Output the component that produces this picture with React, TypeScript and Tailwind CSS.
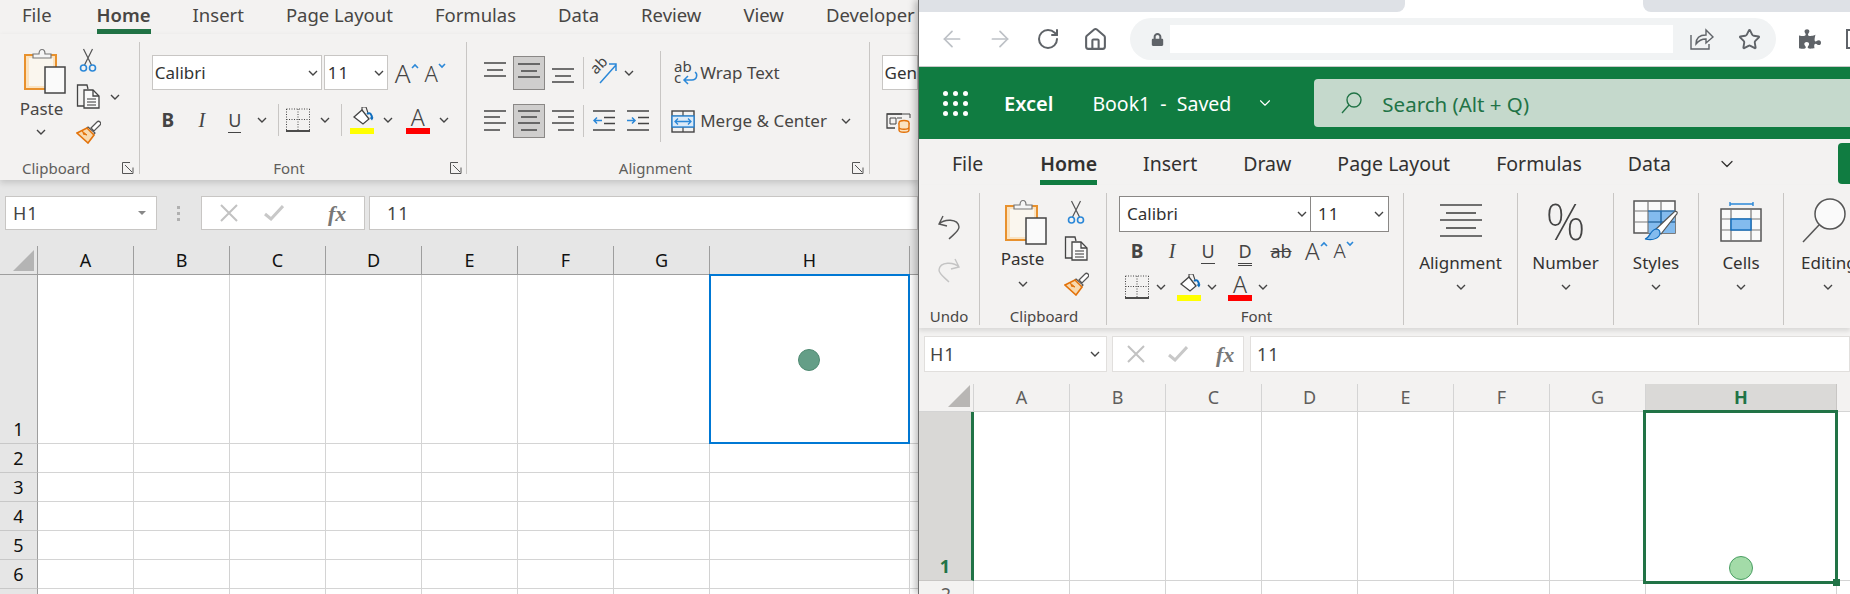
import { ArrowLeft, ArrowRight, RotateCw, Home, Star, ChevronDown } from 'lucide-react';
import { FaPuzzlePiece, FaLock } from 'react-icons/fa';

const Chev = ({ className = '' }: { className?: string }) => (
  <svg width="10" height="6" viewBox="0 0 10 6" className={className} fill="none" stroke="#444" strokeWidth="1.4">
    <path d="M1 1l4 4 4-4" />
  </svg>
);

const Launcher = () => (
  <svg width="12" height="12" viewBox="0 0 12 12" fill="none" stroke="#555" strokeWidth="1">
    <path d="M8 .5H.5v11h8M3 3l7 7M11 5.5v6H5" />
  </svg>
);

const PasteIcon = () => (
  <svg width="42" height="46" viewBox="0 0 42 46" fill="none">
    <rect x="1" y="7" width="31" height="34" fill="#fbe3c0" stroke="#e8912d" strokeWidth="2" />
    <rect x="5" y="10" width="24" height="28" fill="#faf6ee" />
    <path d="M9 10V6h6c0-6 6-6 6 0h6v4z" fill="#f5f5f5" stroke="#777" strokeWidth="1.2" />
    <rect x="21" y="19" width="20" height="26" fill="#fafafa" stroke="#444" strokeWidth="1.5" />
  </svg>
);

const CutIcon = () => (
  <svg width="18" height="25" viewBox="0 0 18 25" fill="none">
    <path d="M4.5 1l8 16M13.5 1l-8 16" stroke="#555" strokeWidth="1.2" />
    <circle cx="4.5" cy="20" r="3" stroke="#2b88d8" strokeWidth="1.6" />
    <circle cx="13.5" cy="20" r="3" stroke="#2b88d8" strokeWidth="1.6" />
  </svg>
);

const CopyIcon = () => (
  <svg width="25" height="25" viewBox="0 0 25 25" fill="none" stroke="#444" strokeWidth="1.3">
    <path d="M8 22H1.5V1h9.5l1 4" />
    <path d="M8 6h9l6 6v12H8z" fill="#fafafa" />
    <path d="M17 6v6h6" />
    <path d="M11 15h9M11 18h9M11 21h9" stroke="#777" />
  </svg>
);

const PainterIcon = () => (
  <svg width="25" height="24" viewBox="0 0 25 24" fill="none">
    <path d="M15 8l6-6a2 2 0 013 3l-6 6z" fill="#fff" stroke="#555" strokeWidth="1.2" />
    <path d="M12 7l7 6-2 2-7-6z" fill="#fff" stroke="#555" strokeWidth="1.2" />
    <path d="M1 13l10-5 7 7-6 8z" fill="#f8d9ae" stroke="#e3730b" strokeWidth="1.6" />
    <path d="M6 11l5 4-4-1" fill="#e3730b" stroke="#e3730b" />
  </svg>
);

const BorderIcon = () => (
  <svg width="24" height="24" viewBox="0 0 24 24" fill="none">
    <path d="M.5 1h23M.5 1v21M23.5 1v21M12 1v21M.5 11.5h23" stroke="#444" strokeDasharray="1 1.5" />
    <path d="M0 23h24" stroke="#222" strokeWidth="1.6" />
  </svg>
);

const FillIcon = () => (
  <div className="flex w-[24px] flex-col items-center">
    <svg width="24" height="20" viewBox="0 0 24 20" fill="none">
      <path d="M4 10l8-7 7 9-6 5z" fill="#fff" stroke="#444" strokeWidth="1.3" />
      <path d="M12 3V0h4l2 6" stroke="#444" strokeWidth="1.1" />
      <path d="M17 7c3-2 5 0 5 5" stroke="#106ebe" strokeWidth="2" />
      <path d="M19.5 10.5l2.5 3 1.5-3z" fill="#106ebe" />
    </svg>
    <div className="mt-[1px] h-[6px] w-[24px] bg-[#ffff00]" />
  </div>
);

const FontColor = () => (
  <div className="flex w-[24px] flex-col items-center">
    <span className="h-[21px] text-[23px] leading-[21px] font-light text-[#444]">A</span>
    <div className="h-[6px] w-[24px] bg-[#ff0000]" />
  </div>
);

const Grow = ({ down, size = 26 }: { down?: boolean; size?: number }) => (
  <div className="flex items-start">
    <span className="font-light text-[#444]" style={{ fontSize: size, lineHeight: '26px' }}>
      A
    </span>
    <svg width="8" height="6" viewBox="0 0 8 6" fill="none" stroke="#2b88d8" strokeWidth="1.6" className="mt-[3px]">
      <path d={down ? 'M1 1l3 3 3-3' : 'M1 5l3-3 3 3'} />
    </svg>
  </div>
);

const Lines = ({ rows, w = 22, h = 24, sw = 1.5 }: { rows: [number, number, number][]; w?: number; h?: number; sw?: number }) => (
  <svg width={w} height={h} viewBox={`0 0 ${w} ${h}`} fill="none" stroke="#444" strokeWidth={sw}>
    {rows.map(([a, b, y], i) => (
      <path key={i} d={`M${a} ${y}H${b}`} />
    ))}
  </svg>
);

const OrientIcon = () => (
  <svg width="26" height="26" viewBox="0 0 26 26" fill="none" className="overflow-visible">
    <text x="0" y="0" fontSize="15" fill="#444" fontFamily="Noto Sans" transform="translate(4 15) rotate(-45)">
      ab
    </text>
    <path d="M8 23L24 5M17 4h7v7" stroke="#2b88d8" strokeWidth="1.5" />
  </svg>
);

const IndentIcon = ({ flip }: { flip?: boolean }) => (
  <svg width="22" height="22" viewBox="0 0 22 22" fill="none" strokeWidth="1.5">
    <path d="M0 1h22M11 7.5h11M11 13.5h11M0 20h22" stroke="#444" />
    <path d={flip ? 'M0 10.5h8M5 7.5l3 3-3 3' : 'M1 10.5h8M4 7.5l-3 3 3 3'} stroke="#2b88d8" />
  </svg>
);

const WrapIcon = () => (
  <svg width="24" height="24" viewBox="0 0 24 24" fill="none" className="overflow-visible">
    <text x="0" y="11" fontSize="15" fill="#444" fontFamily="Noto Sans">ab</text>
    <text x="0" y="22" fontSize="15" fill="#444" fontFamily="Noto Sans">c</text>
    <path d="M21 11c3 2 2 8-3 8h-8M14 15l-4 4 4 4" stroke="#2b88d8" strokeWidth="1.5" />
  </svg>
);

const MergeIcon = () => (
  <svg width="24" height="23" viewBox="0 0 24 23" fill="none">
    <rect x="1" y="1" width="22" height="21" stroke="#444" strokeWidth="1.4" />
    <path d="M1 6h22M1 17h22M12 1v5M12 17v5" stroke="#444" strokeWidth="1.2" />
    <rect x="1" y="6" width="22" height="11" fill="#dceaf7" stroke="#2b88d8" strokeWidth="1.4" />
    <path d="M4 11.5h16M7 8.5l-3 3 3 3M17 8.5l3 3-3 3" stroke="#2b88d8" strokeWidth="1.3" />
  </svg>
);

const PhIcon = () => (
  <svg width="25" height="20" viewBox="0 0 25 20" fill="none">
    <path d="M16 1H1v14h8" stroke="#444" strokeWidth="1.3" />
    <path d="M1 1h23v4M4 5h6v6H4zM11 5h5" stroke="#444" />
    <ellipse cx="18" cy="10" rx="5" ry="2.5" fill="#fbe3c0" stroke="#e3730b" strokeWidth="1.4" />
    <path d="M13 10v7c0 3 10 3 10 0v-7M13 14c0 3 10 3 10 0" fill="#fbe3c0" stroke="#e3730b" strokeWidth="1.4" />
  </svg>
);

const CrossIcon = () => (
  <svg width="18" height="18" viewBox="0 0 18 18" stroke="#c2c2c2" strokeWidth="2" fill="none">
    <path d="M1 1l16 16M17 1L1 17" />
  </svg>
);

const CheckIcon = () => (
  <svg width="20" height="16" viewBox="0 0 20 16" stroke="#c8c8c8" strokeWidth="3" fill="none">
    <path d="M1 9l6 5L19 1" />
  </svg>
);

const Fx = () => <span className="font-['Liberation_Serif',serif] text-[22px] font-bold text-[#777] italic">fx</span>;

const Tab = ({ label, active, bar, className = '' }: { label: string; active?: boolean; bar: string; className?: string }) => (
  <div className={`flex h-full items-start border-b-[5px] whitespace-nowrap ${className} ${active ? `font-semibold ${bar}` : 'border-transparent'}`}>{label}</div>
);

const LeftTabs = ['File', 'Home', 'Insert', 'Page Layout', 'Formulas', 'Data', 'Review', 'View', 'Developer'];
const RightTabs = ['File', 'Home', 'Insert', 'Draw', 'Page Layout', 'Formulas', 'Data'];
const Cols = ['A', 'B', 'C', 'D', 'E', 'F', 'G', 'H'];

function LeftWindow() {
  const sel = 'flex h-[34px] w-[32px] items-center justify-center border border-[#8a8886] bg-[#cfcecd]';
  return (
    <div className="flex w-[918px] shrink-0 flex-col overflow-hidden bg-white">
      <div className="flex h-[34px] gap-[42px] bg-[#f3f2f1] pl-[22px] text-[18.5px] leading-[30px] text-[#484644]">
        {LeftTabs.map((t) => (
          <Tab key={t} label={t} active={t === 'Home'} bar="border-[#217346]" className={t === 'File' ? 'mr-[3px]' : ''} />
        ))}
      </div>

      <div className="relative z-10 flex h-[146px] shrink-0 bg-[#f3f2f1] pt-[8px] shadow-[0_3px_6px_rgba(0,0,0,0.14)]">
        {/* Clipboard */}
        <div className="flex h-[132px] w-[140px] flex-col border-r border-[#c8c6c4]">
          <div className="flex h-[120px] shrink-0 pt-[6px]">
            <div className="ml-[24px] flex w-[42px] flex-col items-center">
              <PasteIcon />
              <span className="mt-[4px] mr-[7px] text-[17px] leading-[22px] text-[#484644]">Paste</span>
              <Chev className="mt-[9px] mr-[9px]" />
            </div>
            <div className="ml-[10px] flex flex-col">
              <div className="ml-[3px]"><CutIcon /></div>
              <div className="mt-[11px] flex items-center">
                <CopyIcon />
                <Chev className="ml-[9px]" />
              </div>
              <div className="mt-[11px]"><PainterIcon /></div>
            </div>
          </div>
          <div className="flex h-[12px] items-center pl-[22px] text-[15px] text-[#605e5c]">
            <span>Clipboard</span>
            <div className="mr-[5px] ml-auto"><Launcher /></div>
          </div>
        </div>

        {/* Font */}
        <div className="flex h-[132px] w-[328px] flex-col border-r border-[#c8c6c4]">
          <div className="h-[120px] shrink-0">
            <div className="flex items-center pt-[13px] pl-[12px]">
              <div className="flex h-[35px] w-[170px] items-center justify-between border border-[#c8c6c4] bg-white pr-[3px] pl-[2px] text-[17px] text-[#333]">
                Calibri <Chev />
              </div>
              <div className="ml-[2px] flex h-[35px] w-[64px] items-center justify-between border border-[#c8c6c4] bg-white pr-[3px] pl-[3px] text-[17px] text-[#333]">
                <span className="tracking-[1px]">11</span> <Chev />
              </div>
              <div className="ml-[7px]"><Grow size={26} /></div>
              <div className="ml-[6px]"><Grow size={22} down /></div>
            </div>
            <div className="mt-[15px] flex h-[30px] items-center pl-[12px]">
              <span className="w-[32px] text-center text-[19px] font-bold text-[#444]">B</span>
              <span className="w-[36px] text-center font-['Liberation_Serif',serif] text-[20px] text-[#444] italic">I</span>
              <span className="w-[30px] text-center text-[18px] leading-[20px] text-[#444]"><span className="border-b-[1.5px] border-[#444]">U</span></span>
              <div className="flex w-[24px] justify-center"><Chev /></div>
              <div className="ml-[4px] h-[32px] w-px bg-[#c8c6c4]" />
              <div className="flex w-[38px] justify-center"><BorderIcon /></div>
              <div className="flex w-[16px] justify-center"><Chev /></div>
              <div className="ml-[8px] h-[32px] w-px bg-[#c8c6c4]" />
              <div className="flex w-[40px] justify-center"><FillIcon /></div>
              <div className="flex w-[12px] justify-center"><Chev /></div>
              <div className="ml-[3px] flex w-[42px] justify-center"><FontColor /></div>
              <Chev />
            </div>
          </div>
          <div className="relative flex h-[12px] items-center justify-center text-[15px] text-[#605e5c]">
            <span className="ml-[-28px]">Font</span>
            <div className="absolute top-0 right-[4px]"><Launcher /></div>
          </div>
        </div>

        {/* Alignment */}
        <div className="flex h-[132px] w-[403px] flex-col border-r border-[#c8c6c4]">
          <div className="flex h-[120px] shrink-0">
            <div className="flex w-[193px] flex-col pt-[14px] pl-[17px]">
              <div className="flex h-[34px] items-center">
                <div className="w-[29px]"><Lines rows={[[0, 22, 2], [3, 19, 9], [0, 22, 15]]} /></div>
                <div className={sel}><Lines rows={[[0, 22, 3], [3, 19, 10], [0, 22, 16]]} /></div>
                <div className="ml-[7px] w-[31px]"><Lines h={24} rows={[[0, 22, 8], [3, 19, 15], [0, 22, 21]]} /></div>
                <div className="h-[32px] w-px bg-[#c8c6c4]" />
                <div className="ml-[8px]"><OrientIcon /></div>
                <Chev className="ml-[6px]" />
              </div>
              <div className="mt-[14px] flex h-[34px] items-center">
                <div className="w-[29px]"><Lines rows={[[0, 22, 2], [0, 16, 8], [0, 22, 14], [0, 16, 21]]} /></div>
                <div className={sel}><Lines rows={[[0, 22, 2], [3, 19, 8], [0, 22, 14], [3, 19, 21]]} /></div>
                <div className="ml-[7px] w-[31px]"><Lines rows={[[0, 22, 2], [6, 22, 8], [0, 22, 14], [6, 22, 21]]} /></div>
                <div className="h-[32px] w-px bg-[#c8c6c4]" />
                <div className="ml-[9px]"><IndentIcon /></div>
                <div className="ml-[12px]"><IndentIcon flip /></div>
              </div>
            </div>
            <div className="mt-[9px] h-[91px] w-px bg-[#c8c6c4]" />
            <div className="flex flex-col pt-[14px]">
              <div className="flex h-[34px] items-center pl-[13px] text-[17px] text-[#484644]">
                <WrapIcon />
                <span className="ml-[2px]">Wrap Text</span>
              </div>
              <div className="mt-[14px] flex h-[34px] items-center pl-[10px] text-[17px] text-[#484644]">
                <MergeIcon />
                <span className="ml-[5px]">Merge &amp; Center</span>
                <Chev className="ml-[14px]" />
              </div>
            </div>
          </div>
          <div className="relative flex h-[12px] items-center justify-center text-[15px] text-[#605e5c]">
            <span className="ml-[-25px]">Alignment</span>
            <div className="absolute top-0 right-[5px]"><Launcher /></div>
          </div>
        </div>

        {/* Number, cut off by the other window */}
        <div className="flex-1 pl-[12px]">
          <div className="mt-[13px] flex h-[35px] items-center overflow-hidden border border-[#c8c6c4] bg-white pl-[2px] text-[17px] text-[#333]">Gen</div>
          <div className="mt-[23px] pl-[4px]"><PhIcon /></div>
        </div>
      </div>

      <div className="flex h-[66px] shrink-0 items-start bg-[#e6e6e6] pt-[16px] pl-[5px]">
        <div className="flex h-[34px] w-[152px] items-center justify-between border border-[#c8c6c4] bg-white pr-[10px] pl-[7px] text-[18px] text-[#444]">
          <span className="tracking-[1px]">H1</span>
          <div className="h-0 w-0 border-x-[4px] border-t-[4px] border-x-transparent border-t-[#888]" />
        </div>
        <div className="mr-[21px] ml-[20px] flex h-[34px] flex-col items-center justify-center gap-[3px]">
          <div className="h-[3px] w-[3px] bg-[#b0b0b0]" />
          <div className="h-[3px] w-[3px] bg-[#b0b0b0]" />
          <div className="h-[3px] w-[3px] bg-[#b0b0b0]" />
        </div>
        <div className="flex h-[34px] w-[164px] items-center border border-[#c8c6c4] bg-white pl-[18px]">
          <CrossIcon />
          <div className="ml-[26px]"><CheckIcon /></div>
          <div className="ml-[44px]"><Fx /></div>
        </div>
        <div className="ml-[4px] flex h-[34px] flex-1 items-center border border-[#c8c6c4] bg-white pl-[17px] text-[18px] tracking-[1px] text-[#444]">11</div>
      </div>

      <div className="grid flex-1 grid-cols-[38px_repeat(7,96px)_200px_1fr] grid-rows-[29px_169px_repeat(7,29px)] overflow-hidden text-[18px] text-[#111]">
        <div className="flex items-end justify-end border-r border-b border-[#9e9e9e] bg-[#e6e6e6] pr-[3px] pb-[3px]">
          <div className="h-0 w-0 border-b-[21px] border-l-[21px] border-b-[#b4b4b4] border-l-transparent" />
        </div>
        {Cols.map((c) => (
          <div key={c} className="flex items-center justify-center border-r border-b border-[#9e9e9e] bg-[#e6e6e6]">{c}</div>
        ))}
        <div className="border-b border-[#9e9e9e] bg-[#e6e6e6]" />
        {[1, 2, 3, 4, 5, 6, 7].map((r) => (
          <>
            <div key={`h${r}`} className="flex items-end justify-center border-r border-b border-r-[#9e9e9e] border-b-[#c8c8c8] bg-[#e6e6e6] leading-[27px]">{r < 7 ? r : ''}</div>
            {Cols.map((c) =>
              r === 1 && c === 'H' ? (
                <div key={c} className="relative border-r border-b border-[#d4d4d4]">
                  <div className="absolute -top-px -right-px -bottom-px -left-px flex items-center justify-center border-2 border-[#0078d4]">
                    <div className="mt-[1px] mr-[2px] h-[22px] w-[22px] rounded-full border border-[#4f8a72] bg-[#649e87]" />
                  </div>
                </div>
              ) : (
                <div key={c} className="border-r border-b border-[#d4d4d4]" />
              ),
            )}
            <div className="border-b border-[#d4d4d4]" />
          </>
        ))}
      </div>
    </div>
  );
}

function ChromeBar() {
  return (
    <>
      <div className="flex h-[12px] shrink-0 bg-white">
        <div className="w-[486px] rounded-br-[8px] bg-[#dee1e6]" />
        <div className="w-[238px]" />
        <div className="flex-1 rounded-bl-[8px] bg-[#dee1e6]" />
      </div>
      <div className="flex h-[55px] shrink-0 items-center border-b border-[#c8c8c8] bg-white pl-[20px]">
        <ArrowLeft size={26} strokeWidth={1.6} className="shrink-0 text-[#bdc1c6]" />
        <ArrowRight size={26} strokeWidth={1.6} className="ml-[22px] shrink-0 text-[#bdc1c6]" />
        <RotateCw size={24} strokeWidth={2} className="ml-[23px] shrink-0 text-[#5f6368]" />
        <Home size={25} strokeWidth={2} className="ml-[23px] shrink-0 text-[#5f6368]" />
        <div className="ml-[22px] flex h-[42px] w-[646px] shrink-0 items-center rounded-full bg-[#f1f3f4] pl-[21px]">
          <FaLock size={13} className="text-[#5f6368]" />
          <div className="ml-[6px] h-[28px] w-[503px] bg-white" />
          <svg width="24" height="22" viewBox="0 0 24 22" fill="none" stroke="#5f6368" strokeWidth="1.4" className="ml-[17px]">
            <path d="M1 7v14h18v-5" />
            <path d="M6 16c0-6 4-9 10-9V2l7 7-7 6v-4c-4 0-7 1-10 5z" />
          </svg>
          <Star size={23} strokeWidth={2} className="ml-[24px] text-[#5f6368]" />
        </div>
        <FaPuzzlePiece size={22} className="ml-[23px] shrink-0 text-[#5f6368]" />
        <div className="ml-[25px] h-[20px] w-[20px] shrink-0 border-2 border-[#5f6368]" />
      </div>
    </>
  );
}

function GreenBar() {
  return (
    <div className="flex h-[72px] shrink-0 items-center bg-[#107c41] pl-[24px] text-white">
      <div className="grid grid-cols-3 gap-[5px]">
        {Array.from({ length: 9 }).map((_, i) => (
          <div key={i} className="h-[5px] w-[5px] rounded-full bg-white" />
        ))}
      </div>
      <span className="ml-[36px] pt-[2px] text-[20px] font-semibold">Excel</span>
      <span className="ml-[39px] pt-[2px] text-[19.5px]">Book1&nbsp; -&nbsp; Saved</span>
      <ChevronDown size={18} strokeWidth={1.5} className="ml-[25px]" />
      <div className="ml-[40px] flex h-[48px] flex-1 items-center rounded-l-[4px] bg-[#c5d9cc] pl-[27px] text-[20.5px] text-[#217346]">
        <svg width="21" height="22" viewBox="0 0 21 22" fill="none" stroke="#217346" strokeWidth="1.4">
          <circle cx="13" cy="8" r="7" />
          <path d="M8 13l-7 8" />
        </svg>
        <span className="ml-[20px] pt-[2px]">Search (Alt + Q)</span>
      </div>
    </div>
  );
}

const Big = ({ icon, label, w }: { icon: React.ReactNode; label: string; w: string }) => (
  <div className={`flex h-[132px] shrink-0 flex-col items-center border-r border-[#c8c6c4] ${w}`}>
    <div className="flex h-[56px] items-center justify-center">{icon}</div>
    <span className="mt-[2px] text-[17px] leading-[24px] whitespace-nowrap text-[#323130]">{label}</span>
    <Chev className="mt-[9px]" />
  </div>
);

const StylesIcon = () => (
  <svg width="46" height="42" viewBox="0 0 46 42" fill="none">
    <rect x="1" y="1" width="41" height="32" fill="#fafafa" stroke="#555" strokeWidth="1.5" />
    <rect x="15" y="11" width="27" height="22" fill="#83bbee" />
    <path d="M1 11h41M1 22h41M15 1v32M28 1v32" stroke="#777" strokeWidth="1.2" />
    <path d="M15 11h27M15 22h27M28 11v22" stroke="#0f6cbd" strokeWidth="1.2" />
    <path d="M22 30L40 13c3-3 6-1 3 2L28 34z" fill="#fff" stroke="#555" strokeWidth="1.2" />
    <path d="M12 39c5-1 5-9 11-10 4 0 5 4 3 7-3 4-9 4-14 3z" fill="#83bbee" stroke="#0f6cbd" strokeWidth="1.2" />
  </svg>
);

const CellsIcon = () => (
  <svg width="42" height="42" viewBox="0 0 42 42" fill="none">
    <path d="M10 2v4M33 2v4M10 4h23" stroke="#2b88d8" strokeWidth="1.4" />
    <rect x="1" y="9" width="40" height="32" fill="#fafafa" stroke="#555" strokeWidth="1.5" />
    <path d="M1 19h40M1 30h40M11 9v32M31 9v32" stroke="#777" strokeWidth="1.2" />
    <rect x="11" y="19" width="20" height="11" fill="#83bbee" stroke="#0f6cbd" strokeWidth="1.4" />
  </svg>
);

function RightRibbon() {
  return (
    <div className="relative z-10 flex h-[143px] shrink-0 overflow-hidden bg-[#f3f2f1] pt-[8px] text-[#323130] shadow-[0_3px_4px_rgba(0,0,0,0.1)]">
      {/* Undo */}
      <div className="flex h-[132px] w-[61px] shrink-0 flex-col items-center border-r border-[#c8c6c4]">
        <div className="h-[115px] shrink-0 pt-[22px]">
          <svg width="22" height="25" viewBox="0 0 22 25" fill="none" stroke="#555" strokeWidth="1.4">
            <path d="M5 1L1 9l8 2M1 9c5-5 19-6 20 3 0 4-5 7-10 12" />
          </svg>
          <svg width="22" height="25" viewBox="0 0 22 25" fill="none" stroke="#c4c4c4" strokeWidth="1.4" className="mt-[18px]">
            <path d="M17 1l4 8-8 2M21 9C16 4 2 3 1 12c0 4 5 7 10 12" />
          </svg>
        </div>
        <span className="text-[15px] leading-[17px] text-[#484644]">Undo</span>
      </div>
      {/* Clipboard */}
      <div className="flex h-[132px] w-[127px] shrink-0 flex-col border-r border-[#c8c6c4]">
        <div className="flex h-[115px] shrink-0">
          <div className="ml-[25px] flex w-[42px] flex-col items-center pt-[6px]">
            <PasteIcon />
            <span className="mt-[3px] mr-[7px] text-[17px] leading-[22px]">Paste</span>
            <Chev className="mt-[11px] mr-[7px]" />
          </div>
          <div className="ml-[17px] flex flex-col pt-[7px]">
            <div className="ml-[3px]"><CutIcon /></div>
            <div className="mt-[11px]"><CopyIcon /></div>
            <div className="mt-[11px]"><PainterIcon /></div>
          </div>
        </div>
        <span className="pl-[2px] text-center text-[15px] leading-[17px] text-[#484644]">Clipboard</span>
      </div>
      {/* Font */}
      <div className="flex h-[132px] w-[297px] shrink-0 flex-col border-r border-[#c8c6c4]">
        <div className="h-[115px] shrink-0 pt-[3px] pl-[12px]">
          <div className="flex h-[36px] w-[270px] items-center border border-[#8a8886] bg-white text-[17px]">
            <div className="flex h-full w-[191px] items-center justify-between border-r border-[#8a8886] pr-[3px] pl-[7px]">Calibri <Chev /></div>
            <div className="flex flex-1 items-center justify-between pr-[4px] pl-[7px]"><span className="tracking-[1px]">11</span> <Chev /></div>
          </div>
          <div className="mt-[6px] flex h-[26px] items-center text-[#444]">
            <span className="ml-[6px] w-[24px] text-center text-[19px] font-bold">B</span>
            <span className="ml-[12px] w-[22px] text-center font-['Liberation_Serif',serif] text-[20px] italic">I</span>
            <span className="ml-[14px] w-[22px] text-center text-[18px] leading-[20px]"><span className="border-b-[1.5px] border-[#444]">U</span></span>
            <span className="ml-[15px] w-[22px] text-center text-[18px] leading-[20px]"><span className="border-b-[3px] border-double border-[#444]">D</span></span>
            <span className="ml-[13px] w-[24px] text-center text-[18px] line-through">ab</span>
            <div className="ml-[12px]"><Grow size={24} /></div>
            <div className="ml-[6px]"><Grow size={20} down /></div>
          </div>
          <div className="mt-[9px] flex h-[28px] items-center">
            <div className="ml-[6px]"><BorderIcon /></div>
            <Chev className="ml-[7px]" />
            <div className="ml-[11px]"><FillIcon /></div>
            <Chev className="ml-[6px]" />
            <div className="ml-[11px]"><FontColor /></div>
            <Chev className="ml-[6px]" />
          </div>
        </div>
        <span className="pl-[3px] text-center text-[15px] leading-[17px] text-[#484644]">Font</span>
      </div>
      <Big w="w-[114px]" label="Alignment" icon={<Lines w={42} h={34} sw={1.6} rows={[[0, 42, 1], [6, 36, 9], [0, 42, 16], [6, 36, 24], [0, 42, 32]]} />} />
      <Big w="w-[96px]" label="Number" icon={<span className="text-[50px] leading-none font-extralight text-[#444]">%</span>} />
      <Big w="w-[85px]" label="Styles" icon={<StylesIcon />} />
      <Big w="w-[85px]" label="Cells" icon={<CellsIcon />} />
      <div className="flex h-[132px] flex-1 flex-col pl-[17px]">
        <div className="flex h-[56px] items-center">
          <svg width="46" height="46" viewBox="0 0 46 46" fill="none" stroke="#555" strokeWidth="1.5" className="shrink-0">
            <circle cx="29" cy="16" r="15" fill="#fafafa" />
            <path d="M18 27L2 44" />
          </svg>
        </div>
        <span className="mt-[2px] text-[17px] leading-[24px] whitespace-nowrap">Editing</span>
        <Chev className="mt-[9px] ml-[22px]" />
      </div>
    </div>
  );
}

function RightWindow() {
  return (
    <div className="relative z-20 flex min-w-0 flex-1 flex-col overflow-hidden border-l border-[#6f6f6f] bg-white shadow-[-3px_0_7px_rgba(0,0,0,0.25)]">
      <ChromeBar />
      <GreenBar />
      <div className="flex h-[46px] shrink-0 gap-[46px] bg-[#f3f2f1] pt-[4px] pl-[33px] text-[19.5px] leading-[41px] text-[#323130]">
        {RightTabs.map((t) => (
          <Tab key={t} label={t} active={t === 'Home'} bar="border-[#107c41]" className={t === 'File' ? 'mr-[11px]' : ''} />
        ))}
        <ChevronDown size={20} strokeWidth={1.5} className="mt-[11px]" />
        <div className="ml-auto h-[41px] w-[12px] shrink-0 rounded-l-[4px] bg-[#107c41]" />
      </div>
      <RightRibbon />
      <div className="flex h-[56px] shrink-0 items-start bg-[#f3f2f1] pt-[8px] pl-[5px]">
        <div className="flex h-[36px] w-[183px] items-center justify-between border border-[#e1dfdd] bg-white pr-[6px] pl-[5px] text-[18px] text-[#444]">
          <span className="tracking-[1px]">H1</span> <Chev />
        </div>
        <div className="ml-[5px] flex h-[36px] w-[132px] items-center border border-[#e1dfdd] bg-white pl-[14px]">
          <CrossIcon />
          <div className="ml-[23px]"><CheckIcon /></div>
          <div className="ml-[28px]"><Fx /></div>
        </div>
        <div className="ml-[6px] flex h-[36px] flex-1 items-center border border-[#e1dfdd] bg-white pl-[6px] text-[18px] tracking-[1px] text-[#444]">11</div>
      </div>

      <div className="grid flex-1 grid-cols-[55px_repeat(7,96px)_191px_1fr] grid-rows-[28px_169px_repeat(2,29px)] overflow-hidden text-[18px] text-[#605e5c]">
        <div className="flex items-end justify-end border-r border-b border-[#d4d4d4] bg-[#f3f2f1] pr-[3px] pb-[4px]">
          <div className="h-0 w-0 border-b-[22px] border-l-[22px] border-b-[#b8b6b4] border-l-transparent" />
        </div>
        {Cols.map((c) =>
          c === 'H' ? (
            <div key={c} className="flex items-center justify-center border-r border-b border-[#c8c6c4] bg-[#dad9d7] font-bold text-[#217346]">{c}</div>
          ) : (
            <div key={c} className="flex items-center justify-center border-r border-b border-[#d4d4d4] bg-[#f3f2f1]">{c}</div>
          ),
        )}
        <div className="border-b border-[#d4d4d4] bg-[#f3f2f1]" />

        <div className="flex items-end justify-center border-r-[3px] border-b border-r-[#217346] border-b-[#c8c6c4] bg-[#d9d8d6] leading-[27px] font-bold text-[#217346]">1</div>
        {Cols.map((c) =>
          c === 'H' ? (
            <div key={c} className="relative">
              <div className="absolute -top-[2px] -right-[1px] -bottom-[3px] -left-[3px] flex items-end justify-center border-[3px] border-[#217346] pb-[1px]">
                <div className="h-[24px] w-[24px] rounded-full border border-[#4a9e63] bg-[#a3dba8]" />
              </div>
              <div className="absolute -right-[3px] -bottom-[5px] h-[7px] w-[7px] bg-[#217346]" />
            </div>
          ) : (
            <div key={c} className="border-r border-b border-[#d4d4d4]" />
          ),
        )}
        <div className="border-b border-[#d4d4d4]" />

        <div className="flex items-start justify-center border-r border-b border-[#d4d4d4] bg-[#f3f2f1] leading-[27px]">2</div>
        {Cols.map((c) => (
          <div key={c} className="border-r border-b border-[#d4d4d4]" />
        ))}
        <div className="border-b border-[#d4d4d4]" />
      </div>
    </div>
  );
}

export default function App() {
  return (
    <div className="flex h-[594px] w-[1850px] overflow-hidden bg-white font-['Noto_Sans',sans-serif]">
      <LeftWindow />
      <RightWindow />
    </div>
  );
}
